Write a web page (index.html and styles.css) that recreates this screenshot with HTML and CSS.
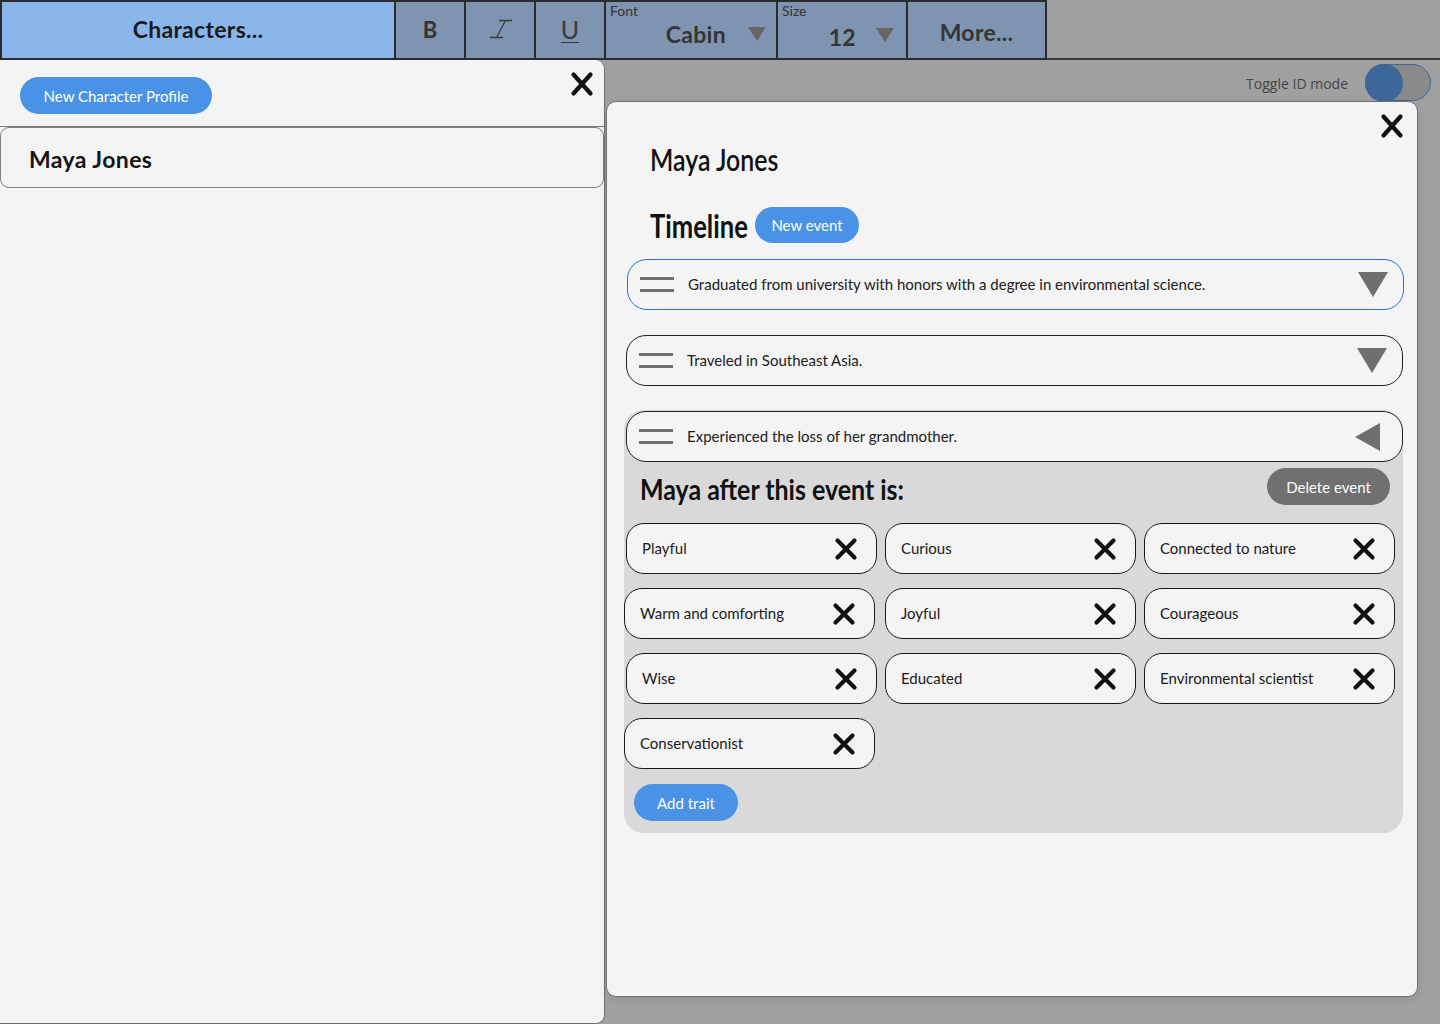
FILE: index.html
```html
<!DOCTYPE html>
<html lang="en">
<head>
<meta charset="utf-8">
<title>Characters</title>
<link rel="stylesheet" href="styles.css">
</head>
<body>
<header class="toolbar">
  <div class="tool chars">Characters...</div>
  <div class="tool fmt fmt-bold">B</div>
  <div class="tool fmt">
    <svg class="italic-icon" width="24" height="20" viewBox="0 0 24 20"><path d="M10 1.5H23M1 18.5H14M16.5 1.5L7.5 18.5" stroke="#3a3a3a" stroke-width="1.3" fill="none"/></svg>
  </div>
  <div class="tool fmt fmt-under">U</div>
  <div class="tool select sel-font">
    <span class="sel-label">Font</span>
    <span class="sel-row"><span class="sel-value">Cabin</span><svg class="caret" width="18" height="14" viewBox="0 0 18 14"><polygon points="0,0 18,0 9,14" fill="#666"/></svg></span>
  </div>
  <div class="tool select sel-size">
    <span class="sel-label">Size</span>
    <span class="sel-row"><span class="sel-value size-value">12</span><svg class="caret" width="18" height="14" viewBox="0 0 18 14"><polygon points="0,0 18,0 9,14" fill="#666"/></svg></span>
  </div>
  <div class="tool more">More...</div>
  <div class="toolbar-rest"></div>
</header>

<div class="workspace">
  <aside class="char-list">
    <div class="list-head">
      <button class="pill pill-blue btn-profile">New Character Profile</button>
      <svg class="close-x" width="24" height="26" viewBox="0 0 24 26"><path d="M3.5 3.5L20.5 22.5M20.5 3.5L3.5 22.5" stroke="#111" stroke-width="4.2" stroke-linecap="round"/></svg>
    </div>
    <div class="char-card">Maya Jones</div>
  </aside>

  <main class="stage">
    <div class="toggle-row">
      <span class="toggle-label">Toggle ID mode</span>
      <div class="switch"><div class="knob"></div></div>
    </div>

    <section class="profile">
      <div class="profile-top">
        <svg class="close-x" width="24" height="26" viewBox="0 0 24 26"><path d="M3.5 3.5L20.5 22.5M20.5 3.5L3.5 22.5" stroke="#111" stroke-width="4.2" stroke-linecap="round"/></svg>
      </div>
      <h1 class="profile-name"><span class="condensed">Maya Jones</span></h1>
      <div class="timeline-head">
        <h2 class="timeline-title"><span class="condensed">Timeline</span></h2>
        <button class="pill pill-blue btn-event">New event</button>
      </div>

      <div class="events">
        <div class="event event-focus">
          <svg class="drag" width="34" height="15" viewBox="0 0 34 15"><path d="M0 1.5H34M0 13.5H34" stroke="#707070" stroke-width="3"/></svg>
          <span class="event-text">Graduated from university with honors with a degree in environmental science.</span>
          <svg class="tri-down" width="30" height="25" viewBox="0 0 30 25"><polygon points="0,0 30,0 15,25" fill="#6f6f6f"/></svg>
        </div>

        <div class="event">
          <svg class="drag" width="34" height="15" viewBox="0 0 34 15"><path d="M0 1.5H34M0 13.5H34" stroke="#707070" stroke-width="3"/></svg>
          <span class="event-text">Traveled in Southeast Asia.</span>
          <svg class="tri-down" width="30" height="25" viewBox="0 0 30 25"><polygon points="0,0 30,0 15,25" fill="#6f6f6f"/></svg>
        </div>

        <div class="event-open">
          <div class="event event-inner">
            <svg class="drag" width="34" height="15" viewBox="0 0 34 15"><path d="M0 1.5H34M0 13.5H34" stroke="#707070" stroke-width="3"/></svg>
            <span class="event-text">Experienced the loss of her grandmother.</span>
            <svg class="tri-left" width="25" height="28" viewBox="0 0 25 28"><polygon points="25,0 25,28 0,14" fill="#6f6f6f"/></svg>
          </div>

          <div class="after-head">
            <h3 class="after-title"><span class="condensed">Maya after this event is:</span></h3>
            <button class="pill pill-gray btn-delete">Delete event</button>
          </div>

          <div class="traits">
            <div class="chip"><span>Playful</span><svg class="chip-x" width="24" height="24" viewBox="0 0 24 24"><path d="M3.5 3.5L20.5 20.5M20.5 3.5L3.5 20.5" stroke="#111" stroke-width="4.2" stroke-linecap="round"/></svg></div>
            <div class="chip"><span>Curious</span><svg class="chip-x" width="24" height="24" viewBox="0 0 24 24"><path d="M3.5 3.5L20.5 20.5M20.5 3.5L3.5 20.5" stroke="#111" stroke-width="4.2" stroke-linecap="round"/></svg></div>
            <div class="chip"><span>Connected to nature</span><svg class="chip-x" width="24" height="24" viewBox="0 0 24 24"><path d="M3.5 3.5L20.5 20.5M20.5 3.5L3.5 20.5" stroke="#111" stroke-width="4.2" stroke-linecap="round"/></svg></div>
            <div class="chip chip-shift"><span>Warm and comforting</span><svg class="chip-x" width="24" height="24" viewBox="0 0 24 24"><path d="M3.5 3.5L20.5 20.5M20.5 3.5L3.5 20.5" stroke="#111" stroke-width="4.2" stroke-linecap="round"/></svg></div>
            <div class="chip"><span>Joyful</span><svg class="chip-x" width="24" height="24" viewBox="0 0 24 24"><path d="M3.5 3.5L20.5 20.5M20.5 3.5L3.5 20.5" stroke="#111" stroke-width="4.2" stroke-linecap="round"/></svg></div>
            <div class="chip"><span>Courageous</span><svg class="chip-x" width="24" height="24" viewBox="0 0 24 24"><path d="M3.5 3.5L20.5 20.5M20.5 3.5L3.5 20.5" stroke="#111" stroke-width="4.2" stroke-linecap="round"/></svg></div>
            <div class="chip"><span>Wise</span><svg class="chip-x" width="24" height="24" viewBox="0 0 24 24"><path d="M3.5 3.5L20.5 20.5M20.5 3.5L3.5 20.5" stroke="#111" stroke-width="4.2" stroke-linecap="round"/></svg></div>
            <div class="chip"><span>Educated</span><svg class="chip-x" width="24" height="24" viewBox="0 0 24 24"><path d="M3.5 3.5L20.5 20.5M20.5 3.5L3.5 20.5" stroke="#111" stroke-width="4.2" stroke-linecap="round"/></svg></div>
            <div class="chip"><span>Environmental scientist</span><svg class="chip-x" width="24" height="24" viewBox="0 0 24 24"><path d="M3.5 3.5L20.5 20.5M20.5 3.5L3.5 20.5" stroke="#111" stroke-width="4.2" stroke-linecap="round"/></svg></div>
            <div class="chip chip-shift"><span>Conservationist</span><svg class="chip-x" width="24" height="24" viewBox="0 0 24 24"><path d="M3.5 3.5L20.5 20.5M20.5 3.5L3.5 20.5" stroke="#111" stroke-width="4.2" stroke-linecap="round"/></svg></div>
          </div>

          <button class="pill pill-blue btn-trait">Add trait</button>
        </div>
      </div>
    </section>
  </main>
</div>
</body>
</html>
```

FILE: styles.css
```css
* { box-sizing: border-box; }

html, body {
  margin: 0;
  padding: 0;
}

body {
  width: 1440px;
  height: 1024px;
  overflow: hidden;
  background: #a0a0a0;
  font-family: Lato, "Open Sans", sans-serif;
  color: #1a1a1a;
}

/* ---------- toolbar ---------- */
.toolbar {
  display: flex;
  height: 60px;
}

.tool {
  height: 60px;
  border-top: 2px solid #2c2c2c;
  border-bottom: 2px solid #2c2c2c;
  border-right: 2px solid #2c2c2c;
  background: #7e94b0;
  color: #353535;
  font-size: 22px;
  font-weight: 700;
  display: flex;
  align-items: center;
  justify-content: center;
}

.chars {
  width: 396px;
  border-left: 2px solid #2c2c2c;
  background: #89b6eb;
  color: #1c1c1c;
  font-size: 23px;
  letter-spacing: 0.3px;
  padding-bottom: 2px;
}

.fmt { width: 70px; padding-bottom: 2px; }

.fmt-bold { font-size: 22px; }

.fmt-under {
  font-weight: 400;
  font-size: 25px;
  text-decoration: underline;
  text-decoration-thickness: 1px;
  text-underline-offset: 3px;
  color: #3a3a3a;
}

.italic-icon { margin-left: 2px; }

.select {
  flex-direction: column;
  align-items: stretch;
  justify-content: flex-start;
}

.sel-font { width: 172px; }
.sel-size { width: 130px; }

.sel-label {
  font-size: 14px;
  font-weight: 400;
  line-height: 16px;
  padding-left: 4px;
  padding-top: 1px;
  color: #353535;
}

.sel-row {
  display: flex;
  align-items: center;
  justify-content: flex-end;
  height: 30px;
}

.sel-value { font-size: 23px; letter-spacing: 0.3px; }

.sel-font .sel-row { padding-right: 10px; gap: 22px; }
.sel-size .sel-row { padding-right: 12px; gap: 20px; }

.size-value { padding-top: 5px; }
.sel-size .caret { margin-top: 1px; }

.more {
  width: 139px;
  font-size: 23px;
  letter-spacing: 0.3px;
  padding-top: 4px;
}

.toolbar-rest {
  flex: 1;
  height: 60px;
  border-bottom: 2px solid #3c3c3c;
}

/* ---------- layout ---------- */
.workspace {
  display: flex;
  height: 964px;
}

.char-list {
  width: 605px;
  height: 964px;
  background: #f4f4f4;
  border: 1px solid #6e6e6e;
  border-left: none;
  border-top: none;
  border-radius: 0 9px 9px 0;
  display: flex;
  flex-direction: column;
}

.list-head {
  height: 67px;
  padding: 17px 10px 0 20px;
  display: flex;
  justify-content: space-between;
  align-items: flex-start;
  border-bottom: 1px solid #7a7a7a;
}

.list-head .close-x { margin-top: -6px; }

.char-card {
  height: 61px;
  border: 1px solid #808080;
  border-radius: 9px;
  display: flex;
  align-items: center;
  padding: 2px 0 0 28px;
  font-size: 23px;
  letter-spacing: 0.4px;
  font-weight: 700;
  color: #141414;
}

/* ---------- buttons ---------- */
.pill {
  border: none;
  height: 37px;
  border-radius: 19px;
  font-family: Lato, "Open Sans", sans-serif;
  font-size: 15px;
  color: #fff;
  display: inline-flex;
  align-items: center;
  justify-content: center;
  padding: 0;
  flex: none;
}

.pill-blue { background: #4a92e6; }
.pill-gray { background: #707070; }

.btn-profile { width: 192px; }
.btn-event { width: 104px; height: 36px; }
.btn-delete { width: 123px; }
.btn-trait { width: 104px; margin: 15px 0 0 10px; }

/* ---------- stage ---------- */
.stage {
  flex: 1;
  display: flex;
  flex-direction: column;
}

.toggle-row {
  height: 41px;
  padding: 4px 9px 0 0;
  display: flex;
  justify-content: flex-end;
  align-items: center;
  gap: 17px;
}

.toggle-label {
  font-family: "Open Sans", Lato, sans-serif;
  font-size: 14px;
  color: #444;
  padding-top: 2px;
}

.switch {
  width: 66px;
  height: 37px;
  border-radius: 19px;
  background: #8a8a8a;
  border: 1px solid #3e679a;
  display: flex;
  align-items: center;
}

.knob {
  width: 38px;
  height: 38px;
  border-radius: 50%;
  background: #3d6699;
  margin-left: -1px;
}

.profile {
  margin-left: 1px;
  width: 812px;
  height: 896px;
  background: #f4f4f4;
  border: 1px solid #6e6e6e;
  border-radius: 10px;
  padding: 12px 14px 0 0;
  box-shadow: 0 3px 8px rgba(0, 0, 0, 0.08);
}

.profile-top {
  display: flex;
  justify-content: flex-end;
  height: 24px;
}

.profile-top .close-x { margin-top: -1px; margin-right: -1px; }

.condensed {
  display: inline-block;
  transform-origin: left center;
  white-space: nowrap;
}

.profile-name {
  margin: 1px 0 0 43px;
  font-size: 30px;
  line-height: 40px;
  font-weight: 600;
  color: #111;
}

.profile-name .condensed { transform: scaleX(0.83); }

.timeline-head {
  margin: 28px 0 0 43px;
  height: 36px;
  display: flex;
  align-items: center;
  gap: 8px;
}

.timeline-title {
  margin: 0;
  width: 97px;
  font-size: 32px;
  line-height: 36px;
  font-weight: 700;
  color: #111;
  padding-top: 2px;
}

.timeline-title .condensed { transform: scaleX(0.8); }

/* ---------- events ---------- */
.events {
  margin: 16px 0 0 19px;
}

.event {
  height: 51px;
  border: 1px solid #222;
  border-radius: 20px;
  background: #f4f4f4;
  display: flex;
  align-items: center;
  padding: 0 15px 0 12px;
  margin-bottom: 25px;
}

.event-focus { border-color: #2f6fd0; margin-left: 1px; margin-right: -1px; }

.drag { flex: none; }

.event-text {
  margin-left: 14px;
  font-size: 15px;
  color: #202020;
  margin-top: -2px;
}

.tri-down, .tri-left { margin-left: auto; flex: none; }

.event-open {
  margin: -1px 0 0 -2px;
  background: #d9d9d9;
  border-radius: 20px;
  padding: 1px 0 12px 0;
}

.event-inner {
  margin: 0 0 0 2px;
  padding-right: 22px;
}

.after-head {
  margin-top: 6px;
  height: 37px;
  padding: 0 13px 0 16px;
  display: flex;
  justify-content: space-between;
  align-items: center;
}

.after-title {
  margin: 0;
  font-size: 29px;
  line-height: 36px;
  font-weight: 700;
  color: #111;
  padding-top: 5px;
}

.after-title .condensed { transform: scaleX(0.86); }

.traits {
  margin: 18px 0 0 2px;
  display: grid;
  grid-template-columns: repeat(3, 251px);
  column-gap: 8px;
  row-gap: 14px;
}

.chip {
  height: 51px;
  border: 1px solid #1a1a1a;
  border-radius: 18px;
  background: #f4f4f4;
  display: flex;
  align-items: center;
  justify-content: space-between;
  padding: 0 18px 0 15px;
  font-size: 15px;
  color: #1a1a1a;
}

.chip > span { margin-top: -2px; }

.chip-shift { margin-left: -2px; margin-right: 2px; }

.chip-x { flex: none; }
```
